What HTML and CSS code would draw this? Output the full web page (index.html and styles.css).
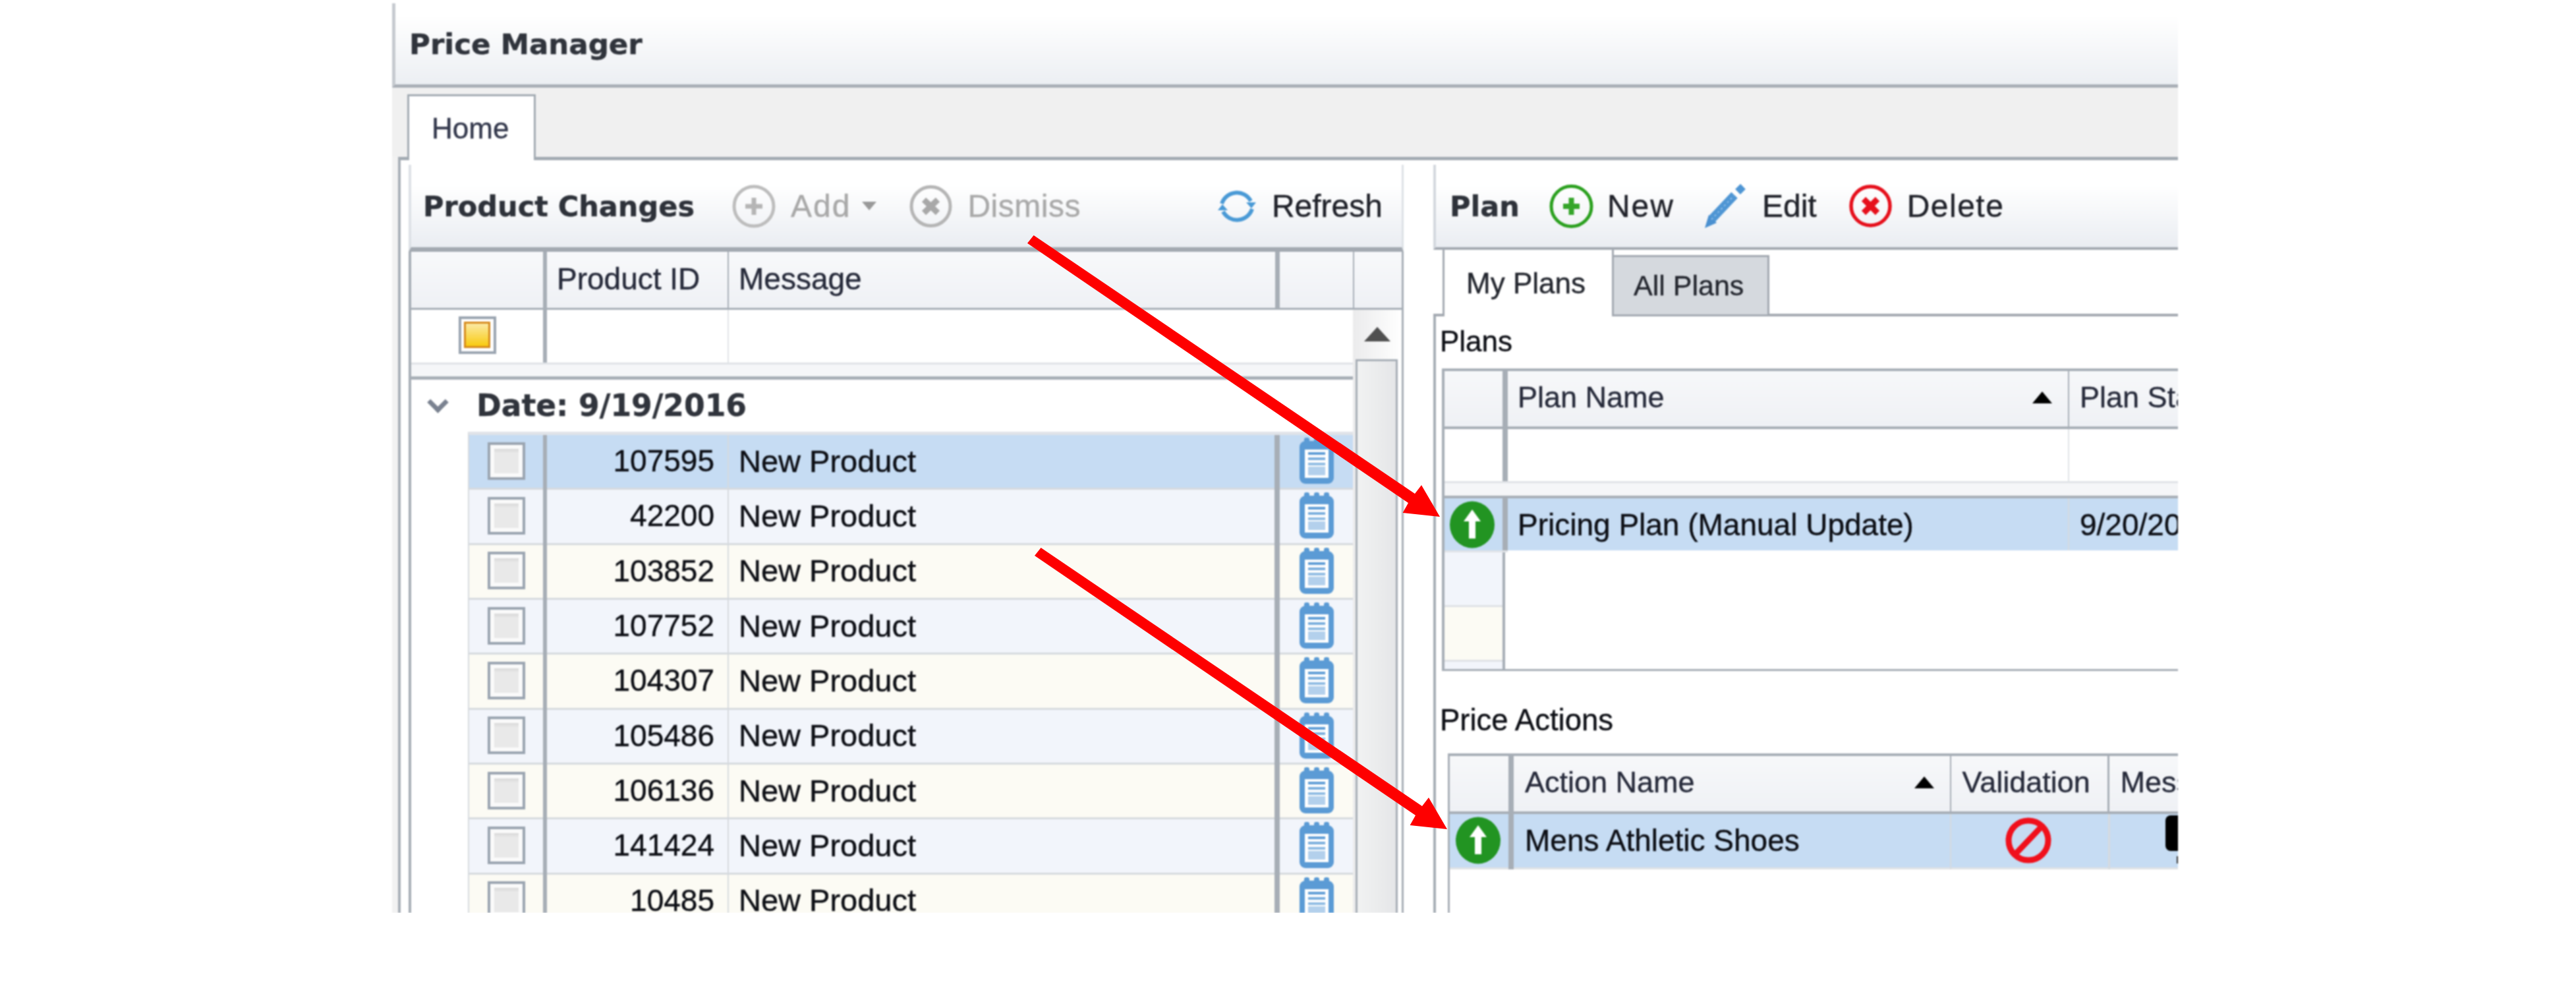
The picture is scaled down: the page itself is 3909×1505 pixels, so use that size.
FILE: index.html
```html
<!DOCTYPE html>
<html>
<head>
	<title>Price Manager</title>
	<link rel="stylesheet" href="styles.css">
</head>
<body>

<svg class="defs" width="0" height="0">
	<symbol id="note" viewBox="0 0 52 70">
		<rect x="0" y="5" width="52" height="65" rx="9" fill="#5b9bd5"/>
		<rect x="7" y="0" width="8" height="14" rx="3" fill="#5b9bd5"/>
		<rect x="22" y="0" width="8" height="14" rx="3" fill="#5b9bd5"/>
		<rect x="37" y="0" width="8" height="14" rx="3" fill="#5b9bd5"/>
		<rect x="8" y="18" width="36" height="43" fill="#fff"/>
		<rect x="13" y="22" width="26" height="4" fill="#5f9dd6"/>
		<rect x="13" y="30" width="26" height="4" fill="#7aaedd"/>
		<rect x="13" y="38" width="26" height="4" fill="#8fbbe3"/>
		<rect x="13" y="44" width="26" height="13" fill="#b3d0ec"/>
	</symbol>
	<symbol id="go" viewBox="0 0 70 72">
		<ellipse cx="35" cy="36" rx="34" ry="35.5" fill="#229422"/>
		<path d="M35 13 L48 31 H40 V57 H30 V31 H22 Z" fill="#fff"/>
	</symbol>
</svg>

<div class="app">
	<div class="titlebar"><span class="title">Price Manager</span></div>
	<div class="tabstrip"><div class="tab">Home</div></div>

	<div class="workspace">
		<div class="pane">

			<div class="panel panel-left">
				<div class="toolbar toolbar-left">
					<span class="bar-title">Product Changes</span>
					<span class="tool tool-add off">
						<svg class="ico" width="66" height="66" viewBox="0 0 66 66"><circle cx="33" cy="33" r="30" fill="none" stroke="#bdbdbd" stroke-width="5"/><path d="M20 33H46M33 20V46" stroke="#b5b5b5" stroke-width="7"/></svg>
						Add<i class="caret"></i>
					</span>
					<span class="tool tool-dismiss off">
						<svg class="ico" width="65" height="66" viewBox="0 0 65 66"><circle cx="32.500" cy="33" r="29.500" fill="none" stroke="#b5b5b5" stroke-width="5"/><path d="M22 23L43 43M43 23L22 43" stroke="#a8a8a8" stroke-width="9"/></svg>
						Dismiss
					</span>
					<span class="tool tool-refresh">
						<svg class="ico" width="60" height="56" viewBox="0 0 60 56"><path d="M7 24A24 24 0 0 1 51 20" fill="none" stroke="#4a9ad6" stroke-width="6"/><path d="M53 32A24 24 0 0 1 9 36" fill="none" stroke="#4a9ad6" stroke-width="6"/><path d="M44 22H59L52 31Z M16 34H1L8 25Z" fill="#4a9ad6"/></svg>
						Refresh
					</span>
				</div>

				<div class="grid">
					<div class="grid-head">
						<div class="hcell c1"></div>
						<div class="hcell c2">Product ID</div>
						<div class="hcell c3">Message</div>
						<div class="hcell c4"></div>
					</div>
					<div class="grid-body">
						<div class="grid-rows">
							<div class="filter-row">
								<div class="fcell c1"><div class="check check-on"><i></i></div></div>
								<div class="fcell c2"></div>
								<div class="fcell c3"></div>
							</div>
							<div class="band"></div>
							<div class="group"><i class="chev"></i>Date: 9/19/2016</div>
							<div class="rows">
								<div class="row sel"><div class="cell k"><div class="check"></div></div><div class="cell id">107595</div><div class="cell msg">New Product</div><div class="cell nt"><svg width="52" height="70"><use href="#note"/></svg></div></div>
								<div class="row alt"><div class="cell k"><div class="check"></div></div><div class="cell id">42200</div><div class="cell msg">New Product</div><div class="cell nt"><svg width="52" height="70"><use href="#note"/></svg></div></div>
								<div class="row"><div class="cell k"><div class="check"></div></div><div class="cell id">103852</div><div class="cell msg">New Product</div><div class="cell nt"><svg width="52" height="70"><use href="#note"/></svg></div></div>
								<div class="row alt"><div class="cell k"><div class="check"></div></div><div class="cell id">107752</div><div class="cell msg">New Product</div><div class="cell nt"><svg width="52" height="70"><use href="#note"/></svg></div></div>
								<div class="row"><div class="cell k"><div class="check"></div></div><div class="cell id">104307</div><div class="cell msg">New Product</div><div class="cell nt"><svg width="52" height="70"><use href="#note"/></svg></div></div>
								<div class="row alt"><div class="cell k"><div class="check"></div></div><div class="cell id">105486</div><div class="cell msg">New Product</div><div class="cell nt"><svg width="52" height="70"><use href="#note"/></svg></div></div>
								<div class="row"><div class="cell k"><div class="check"></div></div><div class="cell id">106136</div><div class="cell msg">New Product</div><div class="cell nt"><svg width="52" height="70"><use href="#note"/></svg></div></div>
								<div class="row alt"><div class="cell k"><div class="check"></div></div><div class="cell id">141424</div><div class="cell msg">New Product</div><div class="cell nt"><svg width="52" height="70"><use href="#note"/></svg></div></div>
								<div class="row"><div class="cell k"><div class="check"></div></div><div class="cell id">10485</div><div class="cell msg">New Product</div><div class="cell nt"><svg width="52" height="70"><use href="#note"/></svg></div></div>
							</div>
						</div>
						<div class="scroll">
							<div class="scroll-up"><i></i></div>
							<div class="scroll-thumb"></div>
						</div>
					</div>
				</div>
			</div>

			<div class="panel panel-right">
				<div class="toolbar toolbar-right">
					<span class="bar-title">Plan</span>
					<span class="tool tool-new">
						<svg class="ico" width="67" height="68" viewBox="0 0 67 68"><circle cx="33.500" cy="34" r="30.500" fill="none" stroke="#2ba01f" stroke-width="5"/><path d="M21 34H46M33.500 21V47" stroke="#35a52a" stroke-width="8"/></svg>
						New
					</span>
					<span class="tool tool-edit">
						<svg class="ico" width="66" height="68" viewBox="0 0 66 68"><path d="M2 67L8 47L20 59Z" fill="#4a90d0"/><path d="M13 53L47 17" stroke="#4f96d4" stroke-width="13"/><path d="M12 54L46 18" stroke="#8fbde6" stroke-width="2" stroke-dasharray="3 4"/><path d="M52 12L60 4" stroke="#4f96d4" stroke-width="11"/></svg>
						Edit
					</span>
					<span class="tool tool-delete">
						<svg class="ico" width="65" height="67" viewBox="0 0 65 67"><circle cx="32.500" cy="33.500" r="29.500" fill="none" stroke="#e6101c" stroke-width="5.500"/><path d="M22 23L43 44M43 23L22 44" stroke="#e6101c" stroke-width="9"/></svg>
						Delete
					</span>
				</div>

				<div class="subtabs">
					<div class="subtab subtab-on">My Plans</div>
					<div class="subtab">All Plans</div>
				</div>

				<div class="subpane">
					<div class="label label-plans">Plans</div>
					<div class="table table-plans">
						<div class="thead">
							<div class="th ind"></div>
							<div class="th name">Plan Name<i class="sort"></i></div>
							<div class="th plain">Plan Status</div>
						</div>
						<div class="tfilter">
							<div class="tf ind"></div>
							<div class="tf name"></div>
						</div>
						<div class="band"></div>
						<div class="tbody">
							<div class="tr tr-sel">
								<div class="td ind"><svg width="70" height="72"><use href="#go"/></svg></div>
								<div class="td name">Pricing Plan (Manual Update)</div>
								<div class="td plain">9/20/2016</div>
							</div>
							<div class="tr"><div class="td ind ind-thin alt"></div></div>
							<div class="tr"><div class="td ind ind-thin"></div></div>
							<div class="tr"><div class="td ind ind-thin alt"></div></div>
						</div>
					</div>

					<div class="label label-actions">Price Actions</div>
					<div class="table table-actions">
						<div class="thead">
							<div class="th ind"></div>
							<div class="th name">Action Name<i class="sort"></i></div>
							<div class="th valid">Validation</div>
							<div class="th plain">Message</div>
						</div>
						<div class="tr tr-sel">
							<div class="td ind"><svg width="70" height="72"><use href="#go"/></svg></div>
							<div class="td name">Mens Athletic Shoes</div>
							<div class="td valid">
								<svg width="70" height="70" viewBox="0 0 70 70"><circle cx="35" cy="35" r="30" fill="none" stroke="#f0101c" stroke-width="9"/><path d="M15 56L55 14" stroke="#f0101c" stroke-width="9"/></svg>
							</div>
							<div class="td plain td-warn"><i class="warn"></i><i class="warn-dot"></i></div>
						</div>
					</div>
				</div>
			</div>

		</div>
	</div>
</div>

<svg class="arrows" width="3909" height="1505">
	<polygon id="arrow" points="1568.600,357 2147,749 2157,736 2185,784 2128.600,778 2137,763 1559,369" fill="#fe0000"/>
	<use href="#arrow" x="11" y="474"/>
</svg>

</body>
</html>
```

FILE: styles.css
```css
body{ margin: 0; padding: 0; background: #fff; font-family: "Liberation Sans", Arial, sans-serif; font-size: 46px; color: #0c0e14; }
.defs{ display: block; height: 0; }
.arrows{ position: absolute; left: 0; top: 0; pointer-events: none; }

.app{ width: 2710px; height: 1380px; margin: 5px 0 0 595px; display: flex; flex-direction: column; overflow: hidden; filter: blur(.8px); -webkit-text-stroke: .4px; }

.titlebar{ height: 123px; flex: none; display: flex; align-items: center; padding-left: 21px; border-left: 5px solid #c6cacf; border-bottom: 5px solid #a9afb6; background: linear-gradient(#fff 15%, #eceff3); }
.title{ font-family: "DejaVu Sans", sans-serif; font-weight: bold; font-size: 43.500px; color: #30343c; }

.tabstrip{ height: 105px; flex: none; display: flex; align-items: flex-end; padding-left: 23px; background: #f0f0f0; }
.tab{ position: relative; z-index: 1; box-sizing: border-box; width: 195px; height: 100px; margin-bottom: -5px; padding-left: 34px; display: flex; align-items: center; background: #fff; border: 3px solid #a3abb3; border-bottom: 0; font-size: 44px; color: #33384c; }

.workspace{ flex: 1; min-height: 0; display: flex; padding-left: 9px; background: #f2f2f2; }
.pane{ flex: 1; display: flex; gap: 45px; padding: 7px 0 0 12px; background: #fff; border-top: 5px solid #a3abb3; border-left: 4px solid #a7aeb6; }
.panel{ display: flex; flex-direction: column; flex: none; }
.panel-left{ width: 1510px; }
.panel-right{ width: 1134px; }

/* toolbars */
.toolbar{ height: 125px; flex: none; display: flex; align-items: center; font-size: 48px; background: linear-gradient(#fff 25%, #eaedf2); }
.toolbar-left{ padding-left: 18px; padding-right: 29px; border-left: 4px solid #dde1e6; border-right: 3px solid #dde1e6; border-bottom: 7px solid #a3a9b1; }
.toolbar-right{ padding-left: 21px; border-left: 4px solid #d3d8de; border-bottom: 4px solid #a3a9b1; }
.bar-title{ font-family: "DejaVu Sans", sans-serif; font-weight: bold; font-size: 43px; color: #2e323a; }
.tool{ display: flex; align-items: center; gap: 23px; color: #20222a; }
.ico{ flex: none; }
.off{ color: #a9a9a9; }
.caret{ width: 0; height: 0; margin-left: -6px; border-left: 11px solid transparent; border-right: 11px solid transparent; border-top: 13px solid #999; }
.tool-add{ margin-left: 57px; letter-spacing: 2px; }
.tool-dismiss{ margin-left: 50px; letter-spacing: .5px; }
.tool-refresh{ margin-left: auto; }
.tool-new{ margin-left: 45px; gap: 21px; letter-spacing: 2px; }
.tool-edit{ margin-left: 44px; }
.tool-delete{ margin-left: 49px; letter-spacing: 1.500px; }

/* product grid */
.grid{ flex: 1; min-height: 0; display: flex; flex-direction: column; border-left: 4px solid #a7aeb6; border-right: 3px solid #a7aeb6; }
.grid-head{ height: 85px; flex: none; display: flex; border-bottom: 3px solid #a7aeb6; background: linear-gradient(#f8f9fb, #eff1f5); }
.hcell{ box-sizing: border-box; padding: 0 0 4px 15px; display: flex; align-items: center; font-size: 46px; color: #262a3a; }
.hcell.c1{ width: 206px; border-right: 6px solid #a7aeb6; }
.hcell.c2{ width: 276px; border-right: 2px solid #a7aeb6; }
.hcell.c3{ width: 836px; border-right: 7px solid #a7aeb6; }
.hcell.c4{ width: 113px; border-right: 2px solid #a7aeb6; }

.grid-body{ flex: 1; min-height: 0; display: flex; }
.grid-rows{ width: 1429px; flex: none; overflow: hidden; }
.filter-row{ height: 80px; display: flex; border-bottom: 3px solid #e0e3e7; }
.fcell{ box-sizing: border-box; display: flex; align-items: center; justify-content: center; padding-bottom: 4px; }
.fcell.c1{ width: 206px; border-right: 6px solid #a7aeb6; }
.fcell.c2{ width: 276px; border-right: 2px solid #e0e3e7; }
.band{ height: 18px; background: #f5f6f8; border-bottom: 5px solid #a7aeb6; }

.check{ box-sizing: border-box; width: 57px; height: 57px; flex: none; border: 4px solid #9aa4b0; background: linear-gradient(#c8c8c8, #e9e9e9 25%); box-shadow: inset 0 0 0 6px #fafafa; }
.check-on{ display: flex; align-items: center; justify-content: center; background: #fff; box-shadow: none; }
.check-on i{ width: 40px; height: 40px; box-sizing: border-box; border: 3px solid #d68a1c; background: linear-gradient(#fbe9a4, #f9cb10); }

.group{ height: 79px; display: flex; align-items: center; padding-left: 95px; font-family: "DejaVu Sans", sans-serif; font-weight: bold; font-size: 45.500px; color: #30343c; }
.chev{ position: relative; width: 32px; height: 21px; margin-left: -68px; margin-right: 40px; }
.chev::before{ content: ""; position: absolute; left: 2px; top: -6px; width: 16px; height: 16px; border-right: 7px solid #7a8290; border-bottom: 7px solid #7a8290; transform: rotate(45deg); }

.rows{ margin-left: 86px; border-top: 5px solid #e0e3e8; border-left: 2px solid #d6dade; }
.row{ height: 83.330px; display: flex; background: linear-gradient(to top, #d6dade 3px, #fcfbf4 3px); }
.row.alt{ background: linear-gradient(to top, #d6dade 3px, #f2f5fb 3px); }
.row.sel{ background: linear-gradient(to top, #d6dade 3px, #c6dcf3 3px); }
.cell{ box-sizing: border-box; display: flex; align-items: center; padding-bottom: 5px; }
.cell.k{ width: 118px; justify-content: center; border-right: 6px solid #a7aeb6; }
.cell.id{ width: 276px; justify-content: flex-end; padding-right: 20px; border-right: 2px solid #d6dade; }
.cell.msg{ width: 836px; padding-left: 15px; border-right: 8px solid #a7aeb6; font-size: 47px; }
.cell.nt{ width: 111px; justify-content: center; }

.scroll{ flex: 1; display: flex; flex-direction: column; background: linear-gradient(to right, #ebebec, #fff); }
.scroll-up{ height: 75px; flex: none; display: flex; justify-content: center; padding-top: 26px; box-sizing: border-box; }
.scroll-up i{ width: 0; height: 0; border-left: 20px solid transparent; border-right: 20px solid transparent; border-bottom: 22px solid #505050; }
.scroll-thumb{ flex: 1; margin: 0 6px 0 4px; border: 3px solid #a7aeb6; border-bottom: 0; background: linear-gradient(to right, #f1f2f2, #e5e6e8); }

/* plans side */
.subtabs{ height: 97px; flex: none; display: flex; align-items: flex-end; padding-left: 14px; border-bottom: 4px solid #a3a9b1; }
.subtab{ position: relative; box-sizing: border-box; width: 236px; height: 93px; margin-bottom: -4px; padding-left: 30px; display: flex; align-items: center; background: #d5d9de; border: 3px solid #a3a9b1; border-left: 0; font-size: 43px; color: #23262e; }
.subtab-on{ width: 260px; height: 101px; padding-left: 33px; background: #fff; border: 3px solid #a3a9b1; border-top: 0; border-bottom: 0; font-size: 44px; z-index: 1; }

.subpane{ flex: 1; min-height: 0; border-left: 4px solid #a7aeb6; }
.label{ box-sizing: border-box; padding-left: 6px; line-height: 56px; font-size: 44px; }
.label-plans{ height: 79px; padding-top: 10px; }
.label-actions{ height: 125px; padding-top: 47px; font-size: 45.500px; }

.table{ border-top: 4px solid #a7aeb6; border-left: 4px solid #a7aeb6; width: 1200px; }
.table-plans{ margin-left: 9px; border-bottom: 3px solid #a7aeb6; }
.table-actions{ margin-left: 18px; border-left-width: 3px; height: 400px; }

.thead{ height: 84px; display: flex; border-bottom: 4px solid #a7aeb6; background: linear-gradient(#f7f8fa, #eff1f5); font-size: 45px; color: #262a3a; }
.th{ box-sizing: border-box; display: flex; align-items: center; padding-bottom: 4px; white-space: nowrap; }
.table-plans .ind{ width: 96px; }
.table-actions .ind{ width: 97px; }
.th.ind{ border-right: 8px solid #a7aeb6; }
.th.name, .td.name{ padding-left: 15px; justify-content: flex-start; }
.table-plans .name{ width: 852px; }
.table-actions .name{ width: 664px; padding-left: 17px; }
.table-actions .th.name{ padding-right: 24px; }
.table-plans .th.name{ padding-right: 24px; }
.th.name{ border-right: 2px solid #a7aeb6; justify-content: space-between; }
.sort{ width: 0; height: 0; border-left: 15px solid transparent; border-right: 15px solid transparent; border-bottom: 18px solid #000; }
.valid{ width: 241px; }
.th.valid{ padding-left: 17px; border-right: 3px solid #a7aeb6; }
.plain{ padding-left: 16px; }

.tfilter{ height: 79px; display: flex; border-bottom: 3px solid #e0e3e7; }
.tf{ box-sizing: border-box; }
.tf.ind{ border-right: 8px solid #a7aeb6; }
.tf.name{ border-right: 2px solid #e0e3e7; }
.table-plans .band{ height: 19px; border-bottom-width: 4px; }

.tbody{ height: 259px; overflow: hidden; }
.tr{ height: 83px; display: flex; }
.td{ box-sizing: border-box; display: flex; align-items: center; white-space: nowrap; }
.tr-sel{ background: #c6dcf3; height: 82px; }
.tr-sel .td{ height: 79px; }
.tr-sel .td.ind{ justify-content: center; padding-right: 4px; border-right: 8px solid #a7aeb6; }
.td.name{ border-right: 2px solid #d6dade; }
.td.valid{ justify-content: center; border-right: 3px solid #d6dade; padding-right: 4px; }
.table-actions .tr-sel{ height: 84px; background: linear-gradient(to top, #e0e2e5 3px, #c6dcf3 3px); }
.table-actions .tr-sel .td{ height: 84px; padding-bottom: 5px; }
.table-plans .tr-sel{ background: linear-gradient(to top, #fff 3px, #c6dcf3 3px); }
.table-plans .tr-sel .td.ind{ box-shadow: 0 3px 0 #e0e3e7; }

.ind-thin{ background: #fcfbf4; box-shadow: inset 0 -3px 0 #dfe2e6; border-right: 4px solid #a7aeb6; width: 92px !important; }
.ind-thin.alt{ background: #f2f5fb; }

.td-warn{ position: relative; padding-left: 84px; }
.warn{ width: 40px; height: 54px; border-radius: 8px; background: #000; margin-top: -22px; }
.warn-dot{ position: absolute; left: 101px; top: 64px; width: 12px; height: 11px; background: #333; }
```
